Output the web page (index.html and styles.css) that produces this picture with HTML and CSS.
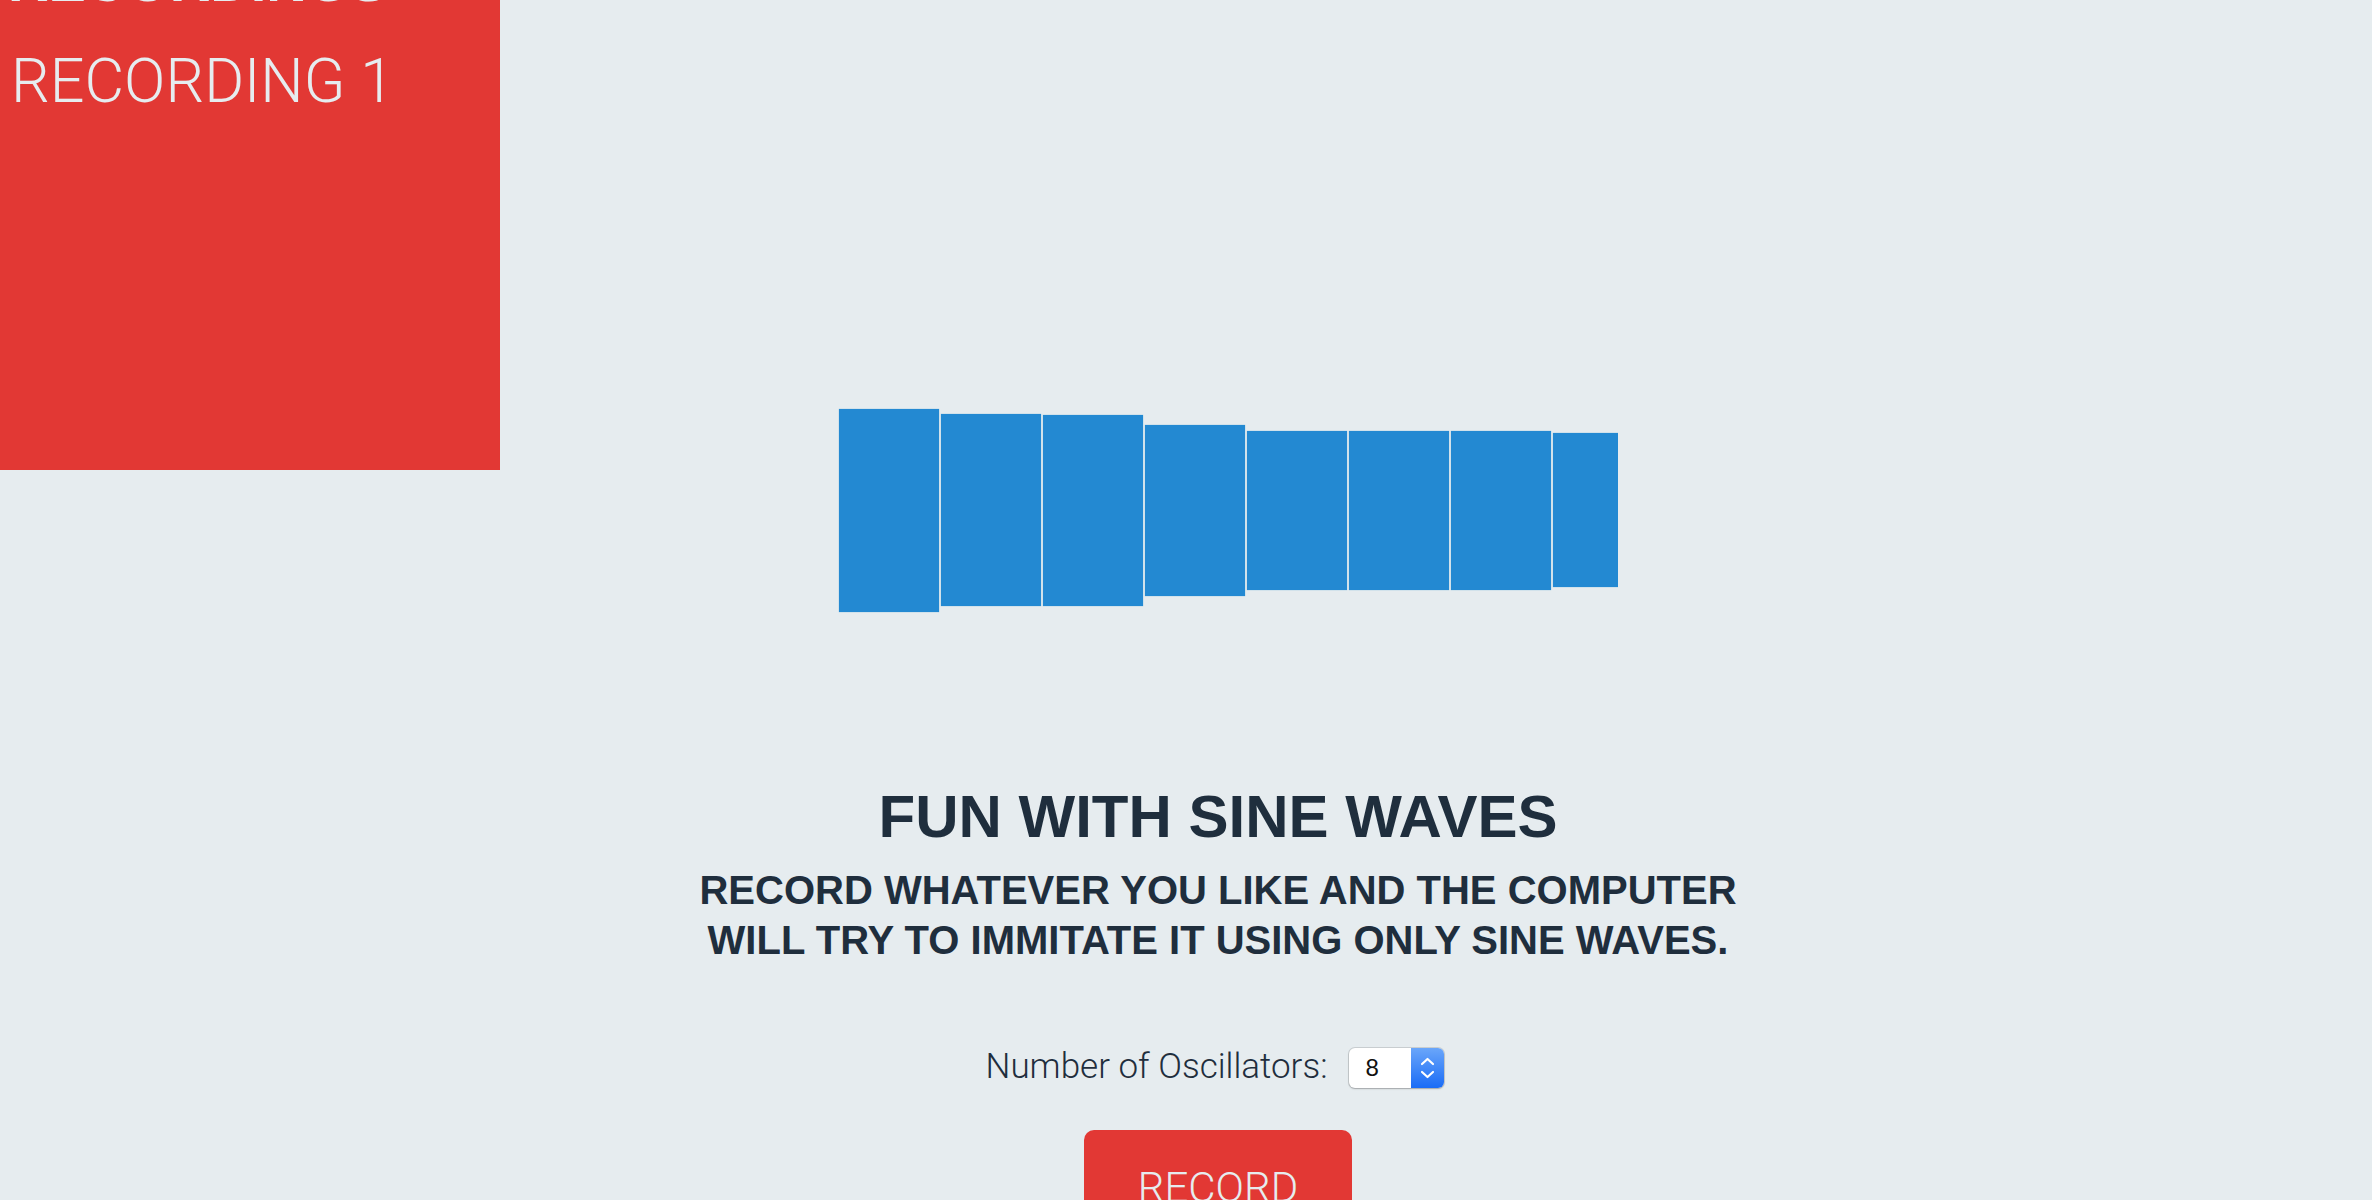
FILE: index.html
```html
<!DOCTYPE html>
<html>
<head>
<meta charset="utf-8">
<title>Fun with sine waves</title>
<link rel="stylesheet" href="styles.css">
</head>
<body>
<aside class="recordings">
  <h2 class="recordings-title">RECORDINGS</h2>
  <ul class="recordings-list">
    <li class="recording-item">RECORDING 1</li>
  </ul>
</aside>
<main class="main">
  <div class="canvas-wrap">
    <div class="bars">
      <div class="bar" style="height:203px"></div>
      <div class="bar" style="height:192px"></div>
      <div class="bar" style="height:191px"></div>
      <div class="bar" style="height:171px"></div>
      <div class="bar" style="height:159px"></div>
      <div class="bar" style="height:159px"></div>
      <div class="bar" style="height:159px"></div>
      <div class="bar" style="height:154px"></div>
    </div>
  </div>
  <h1 class="title">FUN WITH SINE WAVES</h1>
  <p class="subtitle">RECORD WHATEVER YOU LIKE AND THE COMPUTER<br> WILL TRY TO IMMITATE IT USING ONLY SINE WAVES.</p>
  <div class="controls">
    <label class="osc-label">Number of Oscillators:</label>
    <div class="select">
      <span class="select-value">8</span>
      <span class="select-arrows">
        <svg width="33" height="40" viewBox="0 0 33 40">
          <path d="M11 16 L16.5 11 L22 16" fill="none" stroke="#fff" stroke-width="2.2" stroke-linecap="round" stroke-linejoin="round"/>
          <path d="M11 24 L16.5 29 L22 24" fill="none" stroke="#fff" stroke-width="2.2" stroke-linecap="round" stroke-linejoin="round"/>
        </svg>
      </span>
    </div>
  </div>
  <button class="record-btn">RECORD</button>
</main>
</body>
</html>
```

FILE: styles.css
```css
html, body {
  margin: 0;
  padding: 0;
}
body {
  background: #e6ecef;
  width: 2372px;
  height: 1200px;
  overflow: hidden;
  position: relative;
  color: #1f2e3d;
  font-family: "Liberation Sans", Arial, sans-serif;
}
.recordings {
  position: absolute;
  top: 0;
  left: 0;
  width: 500px;
  height: 470px;
  background: #e23834;
  color: #e6ecef;
  padding-left: 8px;
  box-sizing: border-box;
  overflow: hidden;
}
.recordings-title {
  margin: -48px 0 0 0;
  font-family: "Liberation Sans", Arial, sans-serif;
  font-weight: 700;
  font-size: 56px;
  line-height: 60px;
}
.recordings-list {
  list-style: none;
  margin: 34px 0 0 0;
  padding: 0;
}
.recording-item {
  font-family: Roboto, "Liberation Sans", sans-serif;
  font-weight: 300;
  font-size: 61px;
  line-height: 70px;
  padding-left: 3px;
}
.main {
  padding-left: 64px;
  padding-top: 310px;
  display: flex;
  flex-direction: column;
  align-items: center;
}
.canvas-wrap {
  width: 800px;
  height: 400px;
  padding-left: 21px;
  box-sizing: border-box;
  overflow: hidden;
  display: flex;
  align-items: center;
}
.bars {
  display: flex;
  align-items: center;
  gap: 2px;
}
.bar {
  flex: 0 0 100px;
  width: 100px;
  background: #2389d2;
  box-shadow: 0 0 1px rgba(35, 137, 210, 0.6);
}
.title {
  margin: 72px 0 0 0;
  font-weight: 700;
  font-size: 60px;
  line-height: 70px;
  color: #1f2e3d;
}
.subtitle {
  margin: 13px 0 0 0;
  font-weight: 700;
  font-size: 40px;
  line-height: 50px;
  text-align: center;
  color: #1f2e3d;
}
.controls {
  margin-top: 83px;
  height: 40px;
  display: flex;
  align-items: center;
  gap: 22px;
  position: relative;
  left: -3px;
}
.osc-label {
  font-family: Roboto, "Liberation Sans", sans-serif;
  font-weight: 300;
  font-size: 35px;
  color: #1f2e3d;
  position: relative;
  top: -2px;
}
.select {
  width: 95px;
  height: 40px;
  box-sizing: border-box;
  border-radius: 6px;
  background: #fff;
  box-shadow: 0 0 0 1px rgba(0, 0, 0, 0.12), 0 1px 2px rgba(0, 0, 0, 0.2);
  display: flex;
  overflow: hidden;
}
.select-value {
  flex: 1;
  font-family: "Liberation Sans", Arial, sans-serif;
  font-size: 24px;
  line-height: 40px;
  padding-left: 16px;
  color: #111;
}
.select-arrows {
  width: 33px;
  height: 40px;
  background: linear-gradient(#6aa6fa, #1a6cf6);
  display: flex;
}
.record-btn {
  margin-top: 42px;
  width: 268px;
  height: 110px;
  border: none;
  border-radius: 10px;
  background: #e23834;
  color: #e6ecef;
  font-family: Roboto, "Liberation Sans", sans-serif;
  font-weight: 300;
  font-size: 42px;
  line-height: 42px;
  padding: 37px 0 0 0;
  display: flex;
  justify-content: center;
  align-items: flex-start;
}
```
